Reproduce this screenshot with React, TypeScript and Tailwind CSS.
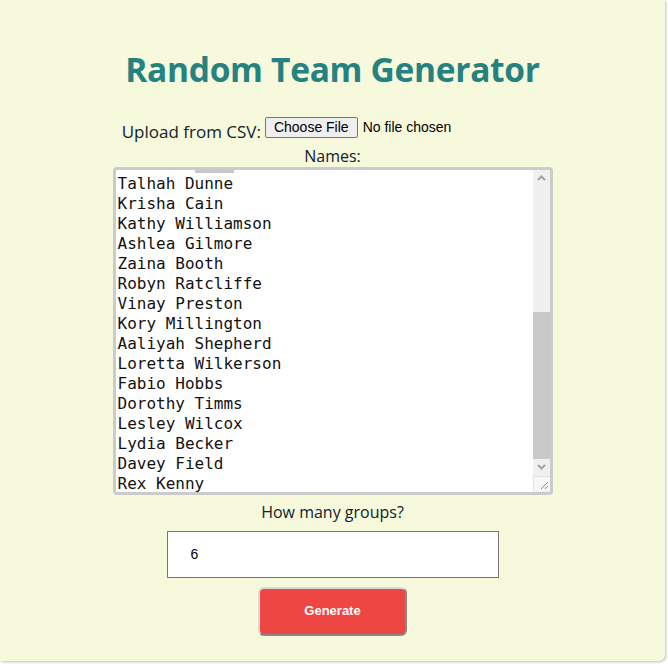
const names = [
  "Talhah Dunne",
  "Krisha Cain",
  "Kathy Williamson",
  "Ashlea Gilmore",
  "Zaina Booth",
  "Robyn Ratcliffe",
  "Vinay Preston",
  "Kory Millington",
  "Aaliyah Shepherd",
  "Loretta Wilkerson",
  "Fabio Hobbs",
  "Dorothy Timms",
  "Lesley Wilcox",
  "Lydia Becker",
  "Davey Field",
  "Rex Kenny",
];

const ui = { fontFamily: '"Open Sans", "Noto Sans", sans-serif' };
const arial = { fontFamily: '"Liberation Sans", Arial, sans-serif' };

function NamesBox() {
  return (
    <div className="relative h-[328px] w-[440px] overflow-hidden rounded-[4px] border-[3px] border-[#cbcbcb] bg-white">
      {/* stray bit of the line above, scrolled out */}
      <div className="absolute left-[79px] top-0 h-[3px] w-[39px] bg-[#c8c8c8]" />
      <div className="pl-[2px] pt-[4px] text-[16px] leading-[20px] text-[#111]" style={{ fontFamily: '"DejaVu Sans Mono", monospace' }}>
        {names.map((n) => <div key={n} className="whitespace-pre">{n}</div>)}
      </div>
      <div className="absolute right-0 top-0 flex h-full w-[17px] flex-col bg-[#f0f0f0]">
        <div className="grid h-[17px] place-items-center">
          <svg width="9" height="6" viewBox="0 0 9 6"><path d="M1 5 L4.5 1.5 L8 5" fill="none" stroke="#a3a3a3" strokeWidth="2" /></svg>
        </div>
        <div className="h-[126px]" />
        <div className="h-[148px] bg-[#c9c9c9]" />
        <div className="grid h-[17px] place-items-center">
          <svg width="9" height="6" viewBox="0 0 9 6"><path d="M1 1 L4.5 4.5 L8 1" fill="none" stroke="#a3a3a3" strokeWidth="2" /></svg>
        </div>
        <div className="relative h-[16px] border-l border-t border-[#e2e2e2] bg-[#f7f7f7]">
          <svg className="absolute bottom-[1px] right-[1px]" width="10" height="10" viewBox="0 0 10 10">
            <path d="M2 9 L9 2 M6 9 L9 6" stroke="#8a8a8a" strokeWidth="1" />
          </svg>
        </div>
      </div>
    </div>
  );
}

export default function App() {
  return (
    <div className="h-[664px] w-[668px] bg-white">
      <div className="flex h-[661px] w-[665px] flex-col items-center rounded-br-[6px] bg-[#f7f9dc] shadow-[1px_1px_3px_rgba(0,0,0,0.25)]" style={ui}>
        <h1 className="mt-[47px] text-[33.5px] font-bold leading-[44px] tracking-[-0.3px] text-[#268281]">Random Team Generator</h1>
        <div className="mt-[20px] flex items-center text-[17px] text-[#10222c]">
          <span className="mt-[8px]">Upload from CSV:</span>
          <span className="ml-[4px] mr-[92px] flex items-center text-[14px] text-black" style={arial}>
            <span className="h-[21px] rounded-[2px] border border-[#767676] bg-[#efefef] px-[8px] leading-[19px]">Choose File</span>
            <span className="ml-[5px]">No file chosen</span>
          </span>
        </div>
        <div className="mt-[0px] text-[16px] leading-[22px] text-[#10222c]">Names:</div>
        <NamesBox />
        <div className="mt-[6px] text-[16px] leading-[22px] text-[#10222c]">How many groups?</div>
        <div className="mt-[8px] flex h-[47px] w-[332px] items-center border border-[#767676] bg-white pl-[23px] text-[14px] text-black" style={arial}>6</div>
        <button className="mt-[9px] h-[49px] w-[149px] rounded-[6px] border-2 border-t-[#d9d9d9] border-l-[#d9d9d9] border-b-[#888] border-r-[#888] bg-[#ee4642] text-[13px] font-bold text-white" style={arial}>
          Generate
        </button>
      </div>
    </div>
  );
}
